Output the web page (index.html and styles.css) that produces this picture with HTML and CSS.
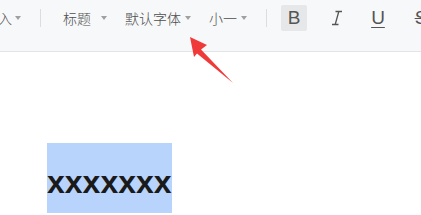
FILE: index.html
```html
<!DOCTYPE html>
<html lang="zh">
<head>
<meta charset="utf-8">
<link rel="stylesheet" href="styles.css">
</head>
<body>
<div class="toolbar">
  <div class="row">
    <span class="item first">入<i class="caret"></i></span>
    <span class="sep sep1"></span>
    <span class="item title">标题<i class="caret c-title"></i></span>
    <span class="item font">默认字体<i class="caret c-font"></i></span>
    <span class="item size">小一<i class="caret c-size"></i></span>
    <span class="sep sep2"></span>
    <span class="btn bold active">B</span>
    <span class="btn italic" title="I"><svg width="12" height="16" viewBox="0 0 12 16"><path d="M4.5 1.5H11M1 14.5H7.5M7.8 1.5L4.2 14.5" stroke="#555" stroke-width="1.3" fill="none"/></svg></span>
    <span class="btn under">U</span>
    <span class="btn strike">S</span>
  </div>
</div>
<div class="page">
  <span class="sel">xxxxxxx</span>
</div>
<svg class="arrow" width="421" height="215" viewBox="0 0 421 215">
  <polygon points="190,37 207,45 201,49.5 233,83 197,53.5 194,57" fill="#f03a3a"/>
</svg>
</body>
</html>
```
FILE: styles.css
```css
html, body {
  margin: 0;
  padding: 0;
  background: #ffffff;
  width: 421px;
  height: 215px;
  overflow: hidden;
  font-family: "Noto Sans CJK SC", "Liberation Sans", sans-serif;
}
.toolbar {
  height: 51px;
  background: #f7f8f9;
  border-bottom: 1px solid #e3e4e6;
  overflow: hidden;
}
.row {
  height: 35px;
  display: flex;
  align-items: center;
  white-space: nowrap;
}
.row > * { flex-shrink: 0; }
.item {
  display: flex;
  align-items: center;
  font-size: 14px;
  font-weight: 300;
  color: #4d4d4d;
  line-height: 20px;
}
.caret {
  display: inline-block;
  width: 0;
  height: 0;
  border-left: 3px solid transparent;
  border-right: 3px solid transparent;
  border-top: 4px solid #a0a0a0;
  margin-left: 3px;
}
.first { margin-left: -2px; }
.first .caret { margin-left: 3px; }
.sep {
  width: 1px;
  height: 18px;
  background: #dcdde0;
}
.sep1 { margin-left: 19px; }
.title { margin-left: 22px; }
.c-title { margin-left: 10px; }
.font { margin-left: 18px; }
.c-font { margin-left: 4px; }
.size { margin-left: 18px; }
.c-size { margin-left: 4px; }
.sep2 { margin-left: 19px; }
.btn {
  display: flex;
  align-items: center;
  justify-content: center;
  width: 26px;
  height: 26px;
  font-family: "Liberation Sans", sans-serif;
  font-size: 19px;
  color: #555;
}
.bold { margin-left: 14px; }
.active { background: #e6e7e9; border-radius: 2px; }
.italic { margin-left: 17px; }
.under {
  margin-left: 15px;
  text-decoration: underline;
  text-underline-offset: 3px;
  text-decoration-thickness: 1px;
}
.strike {
  margin-left: 17px;
  text-decoration: line-through;
  text-decoration-thickness: 1px;
}
.page {
  padding-top: 91px;
  padding-left: 47px;
}
.sel {
  display: inline-block;
  background: #b8d3fc;
  height: 70px;
  line-height: 78px;
  font-family: "Liberation Sans", sans-serif;
  font-weight: bold;
  font-size: 32px;
  color: #1a1a1a;
  vertical-align: top;
}
.arrow {
  position: absolute;
  left: 0;
  top: 0;
  pointer-events: none;
}
```
